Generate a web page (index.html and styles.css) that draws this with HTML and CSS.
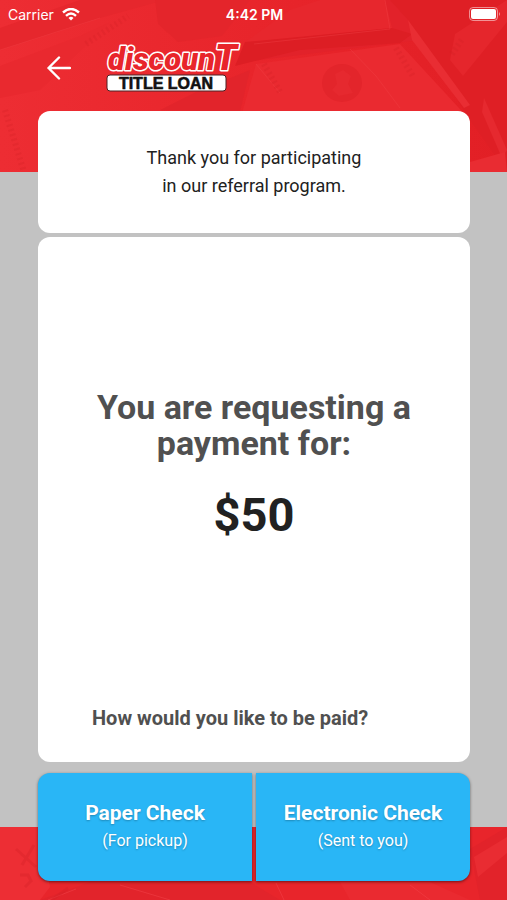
FILE: index.html
```html
<!DOCTYPE html>
<html lang="en">
<head>
  <meta charset="UTF-8" />
  <meta name="viewport" content="width=device-width, initial-scale=1.0" />
  <title>Discount Title Loan</title>
  <link rel="stylesheet" href="styles.css">
</head>
<body>
  <header class="banner">
    <svg class="banner-art" viewBox="0 0 507 172" preserveAspectRatio="xMidYMid slice" aria-hidden="true">
      <defs>
        <linearGradient id="shade" x1="0" y1="0" x2="1" y2="0">
          <stop offset="0" stop-color="#ed2d33" />
          <stop offset="0.5" stop-color="#e8252b" />
          <stop offset="1" stop-color="#e21f25" />
        </linearGradient>
      </defs>
      <rect width="507" height="172" fill="url(#shade)" />
      <path d="M0 50L100 18L165 0H80L0 28z" fill="#e6272d" />
      <path d="M0 66L80 36L110 22L40 90L0 98z" fill="#e9292f" />
      <path d="M250 0L320 0L254 48L245 62L500 30L507 0z" fill="#e2222a" />
      <path d="M245 42L290 10L320 0H385L392 28L254 42z" fill="#e7272d" />
      <path d="M245 42L392 28L412 34L400 43L300 50L235 66z" fill="#dd1e24" />
      <path d="M256 64L400 44L470 120H240z" fill="#ea2a30" />
      <path d="M160 110L196 92L250 70L240 112z" fill="#e2242b" />
      <path d="M155 0H250L222 36L178 42L158 24z" fill="#e4252b" />
      <path d="M390 0L408 20L470 120L507 172V0z" fill="#df1f25" />
      <path d="M408 20L470 105L464 108L412 40z" fill="#e92d33" />
      <path d="M455 34L507 0V22L463 76L450 60z" fill="#e5262c" />
      <path d="M484 98L507 150L502 158L482 112z" fill="#e6292f" />
      <path d="M470 162L505 152L507 172H470z" fill="#e92c32" />
      <ellipse cx="342" cy="83" rx="20" ry="19" fill="#e3252b" />
      <path d="M335 74l8-4l8 6l-3 8l5 9l-14 3l-7-6l5-6z" fill="#e6292f" />
      <path d="M385 0L390 29L254 44M350 49L376 76L400 108M256 64L280 93M0 50L100 18" fill="none" stroke="#f04046" stroke-opacity="0.4" />
      <g fill="none" stroke="#cf1e24" stroke-opacity="0.25" stroke-width="6" stroke-dasharray="2 3">
        <path d="M86 44L128 16" />
        <path d="M396 48L414 78" />
        <path d="M264 64L280 92" />
        <path d="M452 54L463 38" />
        <path d="M5 110L24 172" />
      </g>
    </svg>

    <div class="status-bar">
      <div class="carrier">
        <span>Carrier</span>
        <svg width="18" height="13" viewBox="0 0 18 13" fill="none" stroke="#fff" stroke-width="2.400" aria-hidden="true">
          <path d="M1 4.5Q9 -2.500 17 4.500" />
          <path d="M4 7.800Q9 3.300 14 7.800" />
          <path d="M6.500 9.900Q9 7.700 11.500 9.900L9 12.500z" fill="#fff" stroke="none" />
        </svg>
      </div>
      <div class="time">4:42 PM</div>
      <svg class="battery" width="32" height="14" viewBox="0 0 32 14" aria-hidden="true">
        <rect x="0.500" y="0.500" width="28" height="13" rx="3.500" fill="none" stroke="#fff" stroke-opacity="0.5" />
        <rect x="2" y="2" width="25" height="10" rx="2" fill="#fff" />
        <path d="M30 5q2 2 0 4z" fill="#fff" fill-opacity="0.5" />
      </svg>
    </div>

    <div class="nav">
      <button class="back" type="button" aria-label="Back">
        <svg width="24" height="24" viewBox="0 0 24 24" fill="none" stroke="#fff" stroke-width="2.400" stroke-linecap="round" stroke-linejoin="round">
          <path d="M12 1.500L1.500 12L12 22.500M1.500 12H23" />
        </svg>
      </button>
      <svg class="logo" width="144" height="52" viewBox="0 0 144 52" role="img" aria-label="Discount Title Loan">
        <text class="logo-top" x="3" y="28">discoun<tspan class="logo-t">T</tspan></text>
        <rect x="2" y="33" width="119" height="16" rx="3" fill="#fff" stroke="#4a2326" />
        <text class="logo-bottom" x="61" y="47" text-anchor="middle">TITLE LOAN</text>
      </svg>
    </div>
  </header>

  <main class="content">
    <section class="card intro">
      <p>Thank you for participating<br>in our referral program.</p>
    </section>

    <section class="card request">
      <div class="amount-block">
        <h1>You are requesting a payment for:</h1>
        <p class="amount">$50</p>
      </div>
      <p class="question">How would you like to be paid?</p>
    </section>

    <div class="options">
      <button class="option" type="button">
        <strong>Paper Check</strong>
        <span>(For pickup)</span>
      </button>
      <button class="option" type="button">
        <strong>Electronic Check</strong>
        <span>(Sent to you)</span>
      </button>
    </div>
  </main>

  <footer class="footer">
    <svg class="banner-art" viewBox="0 0 507 73" preserveAspectRatio="xMidYMid slice" aria-hidden="true">
      <rect width="507" height="73" fill="#e8252b" />
      <path d="M0 0H38L50 60L40 73H0z" fill="#ed2e34" />
      <path d="M40 73L90 55H250L280 73z" fill="#e2242b" />
      <path d="M340 55H430L470 73H350z" fill="#ea2a30" />
      <path d="M470 22L507 0V73H480z" fill="#e2232a" />
      <path d="M474 30L507 10V26L478 50z" fill="#e92c32" />
      <path d="M48 73L76 62M120 58L170 73M276 56L284 73M410 58L430 73" fill="none" stroke="#f04046" stroke-opacity="0.6" />
      <path d="M16 22L36 40M34 18L22 38M20 48h8l3 6l-6 6M52 73l16-12" fill="none" stroke="#cf1e24" stroke-opacity="0.3" stroke-width="3" />
    </svg>
  </footer>
</body>
</html>
```
FILE: styles.css
```css
* {
  box-sizing: border-box;
}

body {
  font-family: Roboto, sans-serif;
  margin: 0;
  min-height: 100vh;
  display: flex;
  flex-direction: column;
  background-color: #c2c2c2;
  color: #212121;
}

h1,
p {
  margin: 0;
}

button {
  border: 0;
  font-family: inherit;
  cursor: pointer;
}

.banner {
  position: relative;
  height: 172px;
  flex-shrink: 0;
  overflow: hidden;
  background: #e8252b;
}

.banner-art {
  position: absolute;
  inset: 0;
  width: 100%;
  height: 100%;
}

.status-bar {
  position: relative;
  display: grid;
  grid-template-columns: 1fr auto 1fr;
  align-items: center;
  height: 28px;
  padding: 0 6px 0 8px;
  color: #fff;
  font-family: Inter, sans-serif;
  font-size: 14px;
}

.carrier {
  display: flex;
  align-items: center;
  gap: 8px;
}

.time {
  font-weight: 600;
}

.battery {
  justify-self: end;
}

.nav {
  position: relative;
  display: flex;
  align-items: center;
  gap: 34px;
  height: 80px;
  padding-left: 47px;
}

.back {
  display: flex;
  padding: 0;
  background: none;
}

.logo {
  overflow: visible;
}

.logo-top {
  font-size: 31px;
  font-weight: 900;
  font-style: italic;
  fill: #e8252b;
  stroke: #fff;
  stroke-width: 3px;
  stroke-linejoin: round;
  paint-order: stroke;
}

.logo-t {
  font-size: 36px;
}

.logo-bottom {
  font-family: "Liberation Sans", Arial, sans-serif;
  font-size: 16px;
  font-weight: bold;
  fill: #111;
  stroke: #111;
  stroke-width: 0.6px;
}

.content {
  position: relative;
  z-index: 1;
  flex: 1;
  display: flex;
  flex-direction: column;
  gap: 4px;
  margin: -61px 37px 19px 38px;
}

.card {
  background: #fff;
  border-radius: 12px;
  text-align: center;
}

.intro {
  padding: 33px 16px;
  font-size: 18px;
  line-height: 28px;
}

.request {
  flex: 1;
  display: flex;
  flex-direction: column;
  padding: 32px 54px;
  color: #505050;
}

.amount-block {
  flex: 1;
  display: flex;
  flex-direction: column;
  align-items: center;
  justify-content: center;
  gap: 24px;
  padding-bottom: 42px;
}

h1 {
  font-size: 34px;
  line-height: 36px;
}

.amount {
  color: #212121;
  font-size: 47px;
  font-weight: bold;
  line-height: 60px;
}

.question {
  font-size: 20px;
  font-weight: bold;
  line-height: 24px;
  text-align: left;
}

.options {
  display: grid;
  grid-template-columns: 1fr 1fr;
  gap: 4px;
  margin-top: 7px;
}

.option {
  display: flex;
  flex-direction: column;
  align-items: center;
  justify-content: center;
  gap: 4px;
  height: 108px;
  padding: 0;
  background: #29b6f6;
  color: #fff;
  box-shadow: 0 1px 3px rgba(0, 0, 0, 0.5);
  text-shadow: 0 1px 2px rgba(0, 0, 0, 0.25);
}

.option:first-child {
  border-radius: 12px 0 0 12px;
}

.option:last-child {
  border-radius: 0 12px 12px 0;
}

.option strong {
  font-size: 21px;
  line-height: 24px;
}

.option span {
  font-size: 16px;
  line-height: 24px;
}

.footer {
  position: relative;
  height: 73px;
  margin-top: -73px;
  flex-shrink: 0;
  overflow: hidden;
}
```
